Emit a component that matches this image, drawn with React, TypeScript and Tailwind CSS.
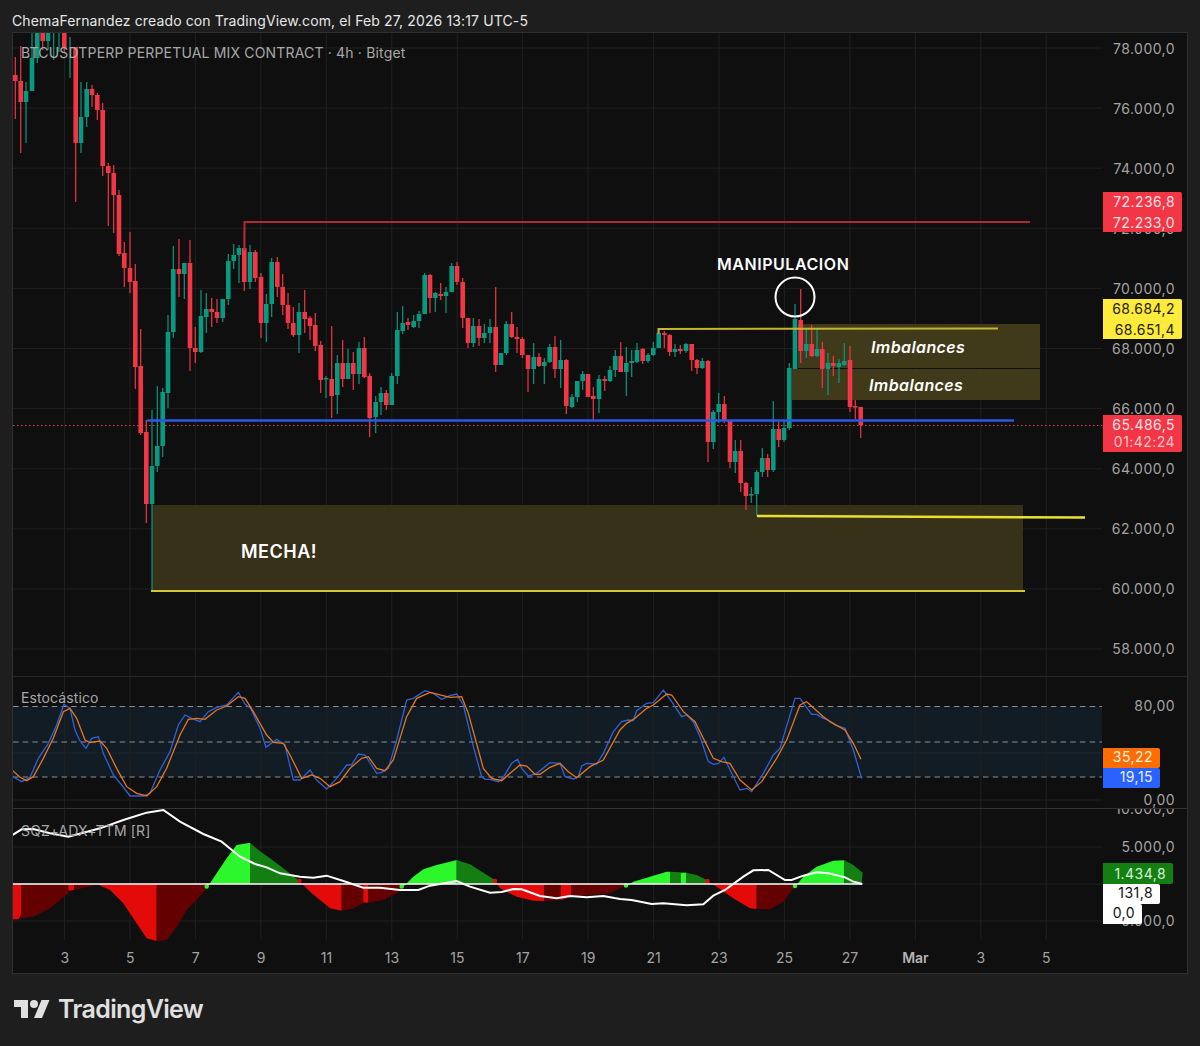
type Candle = [number, "r" | "g", number, number, number, number];

// x, colour, body top, body bottom, wick top, wick bottom (page pixels)
const candles: Candle[] = [
  [15.3, "r", 75, 81, 57, 119], [20.7, "r", 81, 102, 46, 153], [26, "g", 91, 102, 82, 143], [32, "g", 58, 91, 20, 91],
  [37.3, "g", 25, 58, 20, 63], [42.7, "r", 25, 41, 20, 50], [48, "g", 25, 41, 20, 50], [53.7, "g", 20, 22, 20, 60],
  [59, "g", 20, 22, 20, 52], [64.3, "r", 25, 48, 20, 53], [70, "g", 30, 32, 37, 78], [75.7, "r", 47, 143, 47, 202],
  [81, "g", 117, 143, 82, 153], [86.7, "g", 89, 117, 82, 127], [92, "r", 89, 95, 85, 107], [97.3, "r", 95, 110, 93, 120],
  [102.7, "r", 110, 166, 103, 176], [108.3, "r", 166, 173, 163, 226], [113.7, "r", 173, 195, 165, 233], [119, "r", 195, 254, 190, 256],
  [124.3, "r", 253, 268, 242, 287], [130, "r", 268, 282, 232, 293], [135.3, "r", 281, 367, 264, 389], [140.7, "r", 366, 433, 329, 435],
  [146.3, "r", 432, 504, 420, 523], [152, "g", 466, 504, 410, 590], [157.3, "g", 446, 466, 386, 472], [162.7, "g", 392, 446, 388, 457],
  [168, "g", 332, 393, 315, 408], [173.3, "g", 269, 332, 246, 338], [179, "r", 269, 274, 239, 297], [184.3, "g", 263, 274, 263, 299],
  [190, "r", 263, 348, 240, 371], [195.3, "r", 348, 352, 327, 363], [201, "g", 316, 352, 290, 353], [206.3, "g", 309, 317, 293, 333],
  [211.7, "r", 309, 312, 298, 327], [217, "r", 312, 318, 299, 323], [222.7, "g", 299, 318, 299, 322], [228.3, "g", 261, 299, 254, 305],
  [233.7, "g", 255, 261, 244, 269], [239, "g", 248, 255, 245, 283], [244.3, "r", 248, 282, 230, 291], [250, "g", 252, 282, 245, 289],
  [255.3, "r", 252, 278, 250, 282], [261, "r", 277, 323, 273, 338], [266.3, "g", 304, 323, 294, 342], [271.7, "g", 262, 304, 258, 317],
  [277.3, "r", 262, 287, 257, 297], [282.7, "r", 287, 305, 274, 315], [288, "r", 305, 323, 293, 329], [293.3, "r", 323, 335, 307, 337],
  [299, "g", 312, 335, 303, 353], [304.7, "r", 312, 319, 290, 333], [310, "r", 318, 326, 316, 340], [315.3, "r", 325, 346, 313, 351],
  [320.7, "r", 345, 380, 341, 393], [326, "g", 378, 379, 376, 398], [331.7, "r", 379, 396, 326, 418], [337.3, "g", 363, 395, 355, 414],
  [342.7, "r", 363, 379, 340, 387], [348, "g", 363, 379, 349, 379], [353.3, "r", 363, 374, 352, 390], [359, "g", 348, 374, 342, 384],
  [364.3, "r", 348, 377, 337, 378], [369.7, "r", 376, 418, 373, 437], [375.7, "g", 402, 417, 396, 433], [381, "g", 393, 402, 387, 415],
  [386.3, "r", 393, 405, 390, 410], [391.7, "g", 376, 405, 373, 405], [397.3, "g", 330, 376, 312, 384], [402.7, "g", 323, 331, 306, 334],
  [408, "r", 322, 325, 318, 330], [413.7, "g", 321, 327, 315, 328], [419, "g", 314, 321, 311, 328], [424.7, "g", 275, 314, 273, 314],
  [430, "r", 275, 298, 274, 313], [435.3, "g", 293, 298, 292, 312], [440.7, "r", 294, 296, 283, 300], [446, "g", 292, 296, 287, 313],
  [451.7, "g", 266, 292, 263, 292], [457, "r", 266, 282, 262, 285], [462.7, "r", 282, 318, 278, 328], [468, "r", 318, 343, 318, 348],
  [473.3, "g", 326, 343, 318, 347], [479, "r", 326, 338, 319, 346], [484.3, "g", 333, 338, 324, 343], [490, "g", 327, 333, 319, 343],
  [495.7, "r", 327, 365, 287, 372], [501, "g", 353, 365, 353, 365], [506.3, "g", 324, 353, 321, 355], [511.7, "r", 324, 337, 312, 338],
  [517, "r", 337, 339, 327, 353], [522.3, "r", 339, 355, 337, 358], [528, "r", 355, 369, 355, 392], [533.7, "g", 357, 369, 343, 384],
  [539, "r", 357, 366, 353, 367], [544.3, "g", 362, 366, 358, 384], [549.7, "g", 347, 362, 344, 363], [555, "r", 347, 369, 336, 378],
  [560.7, "g", 360, 369, 340, 388], [566.3, "r", 360, 406, 359, 414], [572, "g", 397, 407, 394, 408], [577.3, "g", 381, 397, 381, 402],
  [582.7, "g", 374, 381, 371, 390], [588, "r", 374, 397, 374, 397], [593.3, "r", 396, 399, 387, 421], [599, "g", 379, 399, 375, 413],
  [604.7, "r", 379, 381, 376, 391], [610, "g", 370, 381, 366, 382], [615.3, "g", 356, 370, 350, 377], [620.7, "r", 356, 372, 342, 372],
  [626.3, "g", 363, 372, 347, 396], [631.7, "g", 361, 363, 350, 377], [637, "g", 350, 362, 343, 363], [642.7, "r", 349, 361, 348, 364],
  [648, "g", 355, 361, 353, 363], [653.3, "g", 348, 355, 342, 356], [658.7, "g", 333, 348, 330, 348], [664.3, "r", 333, 335, 331, 348],
  [669.7, "r", 335, 352, 334, 356], [675, "g", 349, 352, 344, 357], [680.3, "r", 349, 351, 345, 354], [686, "g", 344, 351, 343, 353],
  [691.7, "r", 344, 360, 344, 371], [697, "r", 360, 368, 359, 374], [702.3, "g", 361, 368, 358, 369], [708, "r", 361, 442, 360, 462],
  [713.3, "g", 412, 442, 410, 449], [718.7, "g", 404, 412, 393, 423], [724.3, "r", 404, 421, 396, 423], [730, "r", 420, 462, 420, 468],
  [735.3, "g", 451, 462, 440, 473], [740.7, "r", 451, 483, 440, 492], [746, "r", 483, 496, 482, 510], [751.3, "g", 494, 495, 487, 503],
  [756.7, "g", 472, 494, 470, 516], [762.3, "g", 458, 472, 448, 477], [767.7, "r", 458, 470, 454, 477], [773.3, "g", 429, 470, 401, 472],
  [778.7, "r", 429, 440, 422, 447], [784, "g", 428, 440, 420, 442], [789.3, "g", 368, 428, 363, 430], [795, "g", 319, 369, 304, 369],
  [800.7, "r", 320, 351, 289, 363], [806.3, "g", 344, 351, 329, 358], [811.7, "r", 344, 356, 325, 357], [817, "g", 349, 356, 329, 357],
  [822.3, "r", 349, 369, 342, 388], [828, "g", 363, 369, 353, 395], [833.3, "r", 363, 366, 356, 376], [839, "g", 363, 367, 359, 383],
  [844.3, "g", 361, 365, 343, 366], [850, "r", 360, 407, 346, 412], [855.3, "r", 406, 407, 400, 419], [860.7, "r", 407, 425, 407, 438],
];

const dayLines = Array.from({ length: 16 }, (_, i) => 64.5 + i * 65.45);
const priceLines = Array.from({ length: 11 }, (_, i) => 48 + i * 60.1);

const priceTicks = ["78.000,0", "76.000,0", "74.000,0", "72.000,0", "70.000,0", "68.000,0", "66.000,0", "64.000,0", "62.000,0", "60.000,0", "58.000,0"];
const sqzTicks = ["10.000,0", "5.000,0", "", "-5.000,0"];
const days = ["3", "5", "7", "9", "11", "13", "15", "17", "19", "21", "23", "25", "27", "Mar", "3", "5"];

// traced in 3x crop coordinates, x offset per crop, y starts at 680
const toPoints = (pts: number[][], ox: number) => pts.map(([x, y]) => `${ox + x / 3},${680 + y / 3}`).join(" ");

const stochK =
  toPoints([[38,290],[65,305],[90,292],[115,235],[145,190],[170,135],[192,73],[210,85],[225,150],[240,183],[258,205],[275,175],[295,170],[310,220],[340,285],[365,315],[390,348],[430,348],[450,340],[480,270],[510,215],[535,135],[555,105],[575,115],[600,125],[625,95],[650,82],[680,75],[715,37],[735,72],[752,85],[780,145],[798,202],[830,178],[855,195],[880,300],[900,300],[930,270],[950,300],[980,327],[1010,295],[1040,255],[1055,255],[1075,222],[1095,225],[1130,280],[1145,277],[1165,265],[1190,180],[1220,60],[1240,55],[1275,32],[1300,40],[1325,58]], 0) +
  " " +
  toPoints([[0,47],[20,42],[40,75],[70,200],[95,290],[105,298],[120,298],[145,305],[160,292],[185,250],[203,238],[215,265],[235,288],[260,280],[300,248],[330,250],[345,290],[370,297],[385,290],[395,258],[410,250],[440,252],[460,220],[490,155],[515,125],[535,120],[550,122],[560,92],[590,70],[610,68],[640,30],[665,65],[695,110],[710,105],[730,125],[750,170],[775,245],[790,253],[805,250],[822,232],[845,280],[870,330],[890,325],[905,335],[940,280],[970,225],[990,205],[1035,55],[1050,55],[1085,103],[1100,103],[1120,115],[1135,120],[1155,135],[1185,145],[1210,210],[1235,296]], 450);

const stochD =
  toPoints([[38,272],[60,292],[80,302],[100,290],[130,235],[160,175],[190,95],[210,85],[230,115],[255,180],[270,188],[300,183],[320,205],[350,265],[380,320],[410,340],[440,348],[470,320],[500,265],[540,165],[565,118],[590,115],[615,118],[650,90],[680,78],[715,50],[735,55],[760,95],[800,165],[820,187],[850,190],[870,225],[905,295],[935,285],[960,295],[990,320],[1020,305],[1050,265],[1085,235],[1105,230],[1130,265],[1155,272],[1180,240],[1220,110],[1250,55],[1290,37]], 0) +
  " " +
  toPoints([[0,52],[35,50],[55,100],[100,265],[125,295],[155,302],[180,280],[210,255],[230,258],[255,283],[270,283],[300,262],[330,250],[355,275],[380,293],[420,260],[460,240],[510,150],[530,130],[555,115],[590,85],[610,75],[650,42],[665,45],[700,95],[735,125],[790,235],[815,245],[840,250],[870,300],[905,330],[935,305],[980,235],[1010,180],[1050,75],[1070,65],[1120,110],[1140,125],[1185,150],[1210,190],[1233,238]], 450);

const adx =
  toPoints([[38,465],[65,448],[100,447],[150,460],[205,470],[250,458],[300,445],[370,420],[440,398],[490,390],[540,425],[610,462],[665,485],[720,530],[765,552],[800,562],[840,580],[900,590],[940,593],[980,587],[1030,603],[1090,623],[1140,623],[1200,630],[1255,630],[1290,617]], 0) +
  " " +
  toPoints([[0,607],[20,603],[60,620],[120,638],[155,636],[190,627],[215,628],[270,648],[320,655],[360,648],[410,652],[460,648],[510,657],[545,660],[605,672],[640,670],[710,676],[760,673],[790,647],[825,630],[880,590],[910,571],[955,570],[1005,600],[1025,600],[1060,587],[1100,577],[1135,580],[1185,592],[1210,605],[1237,612]], 450);

const RED = "#e30a0a";
const DARK_RED = "#650000";
const GREEN = "#2cf72c";
const DARK_GREEN = "#137f13";

const histogram: [string, number, number[][]][] = [
  [RED, 0, [[38,718],[55,718],[63,705]]],
  [DARK_RED, 0, [[63,715],[100,710],[150,685],[205,640]]],
  [RED, 0, [[205,632],[222,630]]],
  [DARK_RED, 0, [[222,630],[290,615]]],
  [RED, 0, [[290,612],[330,630],[370,670],[410,730],[440,775],[470,783]]],
  [DARK_RED, 0, [[470,783],[500,780],[530,740],[560,690],[590,660],[620,625]]],
  [GREEN, 0, [[620,625],[650,580],[680,535],[710,495],[750,488]]],
  [DARK_GREEN, 0, [[750,488],[775,510],[810,535],[850,565],[895,600]]],
  [RED, 0, [[895,600],[930,635],[960,660],[990,685],[1025,692]]],
  [DARK_RED, 0, [[1025,692],[1060,685],[1090,670]]],
  [RED, 0, [[1090,668],[1105,668]]],
  [DARK_RED, 0, [[1105,668],[1150,660],[1190,640],[1205,625]]],
  [GREEN, 0, [[1205,625],[1240,590],[1270,568],[1310,555],[1350,545],[1370,540]]],
  [DARK_GREEN, 450, [[20,540],[60,553],[100,578],[135,600]]],
  [RED, 450, [[135,600],[150,625],[200,650],[250,662],[283,663]]],
  [DARK_RED, 450, [[283,663],[332,660]]],
  [RED, 450, [[332,660],[363,650]]],
  [DARK_RED, 450, [[363,650],[420,645],[480,640],[525,618]]],
  [GREEN, 450, [[525,620],[550,605],[600,590],[650,575],[660,575]]],
  [DARK_GREEN, 450, [[660,575],[692,577]]],
  [GREEN, 450, [[692,578],[708,578]]],
  [DARK_GREEN, 450, [[708,578],[740,585],[770,600]]],
  [RED, 450, [[770,602],[800,620],[850,655],[900,685],[920,687]]],
  [DARK_RED, 450, [[920,687],[960,688],[1000,665],[1035,618]]],
  [GREEN, 450, [[1035,620],[1060,590],[1100,560],[1150,542],[1183,541]]],
  [DARK_GREEN, 450, [[1183,541],[1210,555],[1238,578],[1235,612]]],
];

// rounded feet where the histogram changes sign
const feet: [number, number, string][] = [
  [206.7, 886.5, GREEN], [401.7, 886.5, GREEN], [626, 885.5, GREEN], [795, 886, GREEN],
  [299.5, 881, RED], [495, 881, RED], [707.5, 881, RED],
];

function Candles() {
  return (
    <>
      {candles.map(([x, c, top, bottom, hi, lo]) => {
        const fill = c === "r" ? "#f23645" : "#089981";
        return (
          <g key={x} fill={fill}>
            <rect x={x - 0.6} y={hi} width={1.2} height={lo - hi} />
            <rect x={x - 2.3} y={top} width={4.6} height={Math.max(bottom - top, 1.5)} />
          </g>
        );
      })}
    </>
  );
}

function VerticalGrid({ y1, y2 }: { y1: number; y2: number }) {
  return (
    <>
      {dayLines.map((x) => (
        <line key={x} x1={x} x2={x} y1={y1} y2={y2} stroke="#202020" />
      ))}
    </>
  );
}

function Badge({ className, children }: { className: string; children: React.ReactNode }) {
  return <div className={`absolute left-[1px] flex flex-col items-end justify-center rounded-r-[2px] pr-[7px] ${className}`}>{children}</div>;
}

function PricePane() {
  return (
    <div className="flex h-[644px] border-b border-[#262626]">
      <div className="relative w-[1089px] shrink-0 overflow-hidden">
        <svg viewBox="13 33 1089 643" width={1089} height={643}>
          {priceLines.map((y) => (
            <line key={y} x1={13} x2={1102} y1={y} y2={y} stroke="#202020" />
          ))}
          <VerticalGrid y1={33} y2={676} />
          <rect x={152} y={505} width={871} height={86} fill="#37311a" />
          <rect x={798} y={324} width={242} height={44} fill="#403a1b" />
          <rect x={792} y={369} width={248} height={31} fill="#403a1b" />
          <line x1={13} x2={1102} y1={425.5} y2={425.5} stroke="#f23645" strokeDasharray="1.5 2.5" />
          <Candles />
          <polyline points="244.5,250 244.5,222 1030,222" fill="none" stroke="#b02a35" strokeWidth={2} />
          <polyline points="658.5,334 658.5,329 998,328.5" fill="none" stroke="#c4b52e" strokeWidth={2} />
          <line x1={147} x2={1014} y1={420.5} y2={420.5} stroke="#2b58e8" strokeWidth={2.4} />
          <line x1={151} x2={1025} y1={591} y2={591} stroke="#d4c535" strokeWidth={2} />
          <line x1={757} x2={1085} y1={516} y2={517.5} stroke="#ece02f" strokeWidth={2.4} />
          <circle cx={795} cy={297} r={19.5} fill="none" stroke="#ffffff" strokeWidth={2} />
        </svg>
        <span className="absolute left-[8px] top-[9px] text-[14px] tracking-[0.17px] text-[#a8a8a8]">BTCUSDTPERP PERPETUAL MIX CONTRACT · 4h · Bitget</span>
        <span className="absolute left-[704px] top-[219px] text-[16px] font-semibold tracking-[0.55px] text-white">MANIPULACION</span>
        <span className="absolute left-[858px] top-[302px] text-[16px] font-semibold italic tracking-[0.4px] text-white">Imbalances</span>
        <span className="absolute left-[856px] top-[340px] text-[16px] font-semibold italic tracking-[0.4px] text-white">Imbalances</span>
        <span className="absolute left-[228px] top-[505px] text-[18px] font-semibold tracking-[0.5px] text-white">MECHA!</span>
      </div>
      <div className="relative flex-1 overflow-hidden tracking-[0.45px]">
        <div className="-mt-[15px] flex flex-col items-end pr-[12px] text-[#a3a3a3]">
          {priceTicks.map((t) => (
            <span key={t} className="flex h-[60.1px] shrink-0 items-center">
              {t}
            </span>
          ))}
        </div>
        <Badge className="top-[159px] h-[40px] w-[79px] bg-[#f23645] text-[#fbe3e5]">
          <span>72.236,8</span>
          <span>72.233,0</span>
        </Badge>
        <Badge className="top-[266px] h-[40px] w-[79px] bg-[#ffeb3b] text-[#1c1c0a]">
          <span>68.684,2</span>
          <span>68.651,4</span>
        </Badge>
        <Badge className="top-[382px] h-[37px] w-[79px] bg-[#f23645] pb-[2px] leading-[17px] text-[#fbe3e5]">
          <span>65.486,5</span>
          <span className="text-[#fcc4c9]">01:42:24</span>
        </Badge>
      </div>
    </div>
  );
}

function StochPane() {
  return (
    <div className="flex h-[132px] border-b border-[#333333]">
      <div className="relative w-[1089px] shrink-0 overflow-hidden">
        <svg viewBox="13 677 1089 131" width={1089} height={131}>
          <rect x={13} y={706.5} width={1089} height={70.5} fill="#121c25" />
          <line x1={13} x2={1102} y1={753} y2={753} stroke="#1d2730" />
          <line x1={13} x2={1102} y1={800} y2={800} stroke="#202020" />
          <VerticalGrid y1={677} y2={808} />
          {[706.5, 742, 777].map((y) => (
            <line key={y} x1={13} x2={1102} y1={y} y2={y} stroke="#8a8f94" strokeDasharray="5.5 4.2" />
          ))}
          <polyline points={stochK} fill="none" stroke="#2e62d8" strokeWidth={1.3} />
          <polyline points={stochD} fill="none" stroke="#e8761a" strokeWidth={1.3} />
        </svg>
        <span className="absolute left-[8px] top-[10px] text-[14px] tracking-[0.1px] text-[#a8a8a8]">Estocástico</span>
      </div>
      <div className="relative flex-1 tracking-[0.45px]">
        <div className="flex flex-col gap-[74px] pr-[12px] pt-[19px] text-right text-[#a3a3a3]">
          <span className="h-[20px] leading-[20px]">80,00</span>
          <span className="h-[20px] leading-[20px]">0,00</span>
        </div>
        <Badge className="top-[71px] h-[20px] w-[57px] bg-[#ff6d00] pb-[3px] text-[#fff0e0]">35,22</Badge>
        <Badge className="top-[91px] h-[20px] w-[57px] bg-[#2962ff] pb-[3px] text-[#e8eeff]">19,15</Badge>
      </div>
    </div>
  );
}

function SqzPane() {
  return (
    <div className="flex h-[133px]">
      <div className="relative w-[1089px] shrink-0 overflow-hidden">
        <svg viewBox="13 809 1089 133" width={1089} height={133}>
          {[847, 884, 921].map((y) => (
            <line key={y} x1={13} x2={1102} y1={y} y2={y} stroke="#202020" />
          ))}
          <VerticalGrid y1={809} y2={940} />
          {histogram.map(([fill, ox, pts], i) => (
            <polygon
              key={i}
              fill={fill}
              points={toPoints([[pts[0][0], 612], ...pts, [pts[pts.length - 1][0], 612]], ox)}
            />
          ))}
          {feet.map(([cx, cy, fill]) => (
            <circle key={cx} cx={cx} cy={cy} r={2.2} fill={fill} />
          ))}
          <line x1={13} x2={862} y1={884} y2={884} stroke="#ffffff" strokeWidth={1.6} />
          <polyline points={adx} fill="none" stroke="#ffffff" strokeWidth={2} />
        </svg>
        <span className="absolute left-[8px] top-[11px] text-[14px] tracking-[0.15px] text-[#a8a8a8]">SQZ+ADX+TTM [R]</span>
      </div>
      <div className="relative flex-1 overflow-hidden tracking-[0.45px]">
        <div className="-mt-[19px] flex flex-col items-end pr-[12px] text-[#a3a3a3]">
          {sqzTicks.map((t) => (
            <span key={t} className="flex h-[37.4px] shrink-0 items-center">
              {t}
            </span>
          ))}
        </div>
        <Badge className="top-[54px] h-[21px] w-[70px] bg-[#137f13] text-[#d8f0d8]">1.434,8</Badge>
        <Badge className="top-[75px] h-[20px] w-[57px] bg-white pb-[3px] text-[#111111]">131,8</Badge>
        <Badge className="top-[95px] h-[20px] w-[39px] bg-white pb-[3px] pr-[6px] text-[#111111]">0,0</Badge>
      </div>
    </div>
  );
}

function TimeAxis() {
  return (
    <div className="flex h-[32px] items-center pl-[19px]">
      {days.map((d, i) => (
        <span
          key={i}
          className={`w-[65.45px] shrink-0 text-center ${d === "Mar" ? "font-semibold text-[#b5b5b5]" : "text-[#a3a3a3]"}`}
        >
          {d}
        </span>
      ))}
    </div>
  );
}

export default function App() {
  return (
    <div className="flex h-[1046px] w-[1200px] flex-col overflow-hidden bg-[#1e1e1e] font-['Inter',sans-serif] text-[14px]">
      <header className="flex h-[32px] items-center px-3 pt-[9px] text-[14px] tracking-[0.13px] text-[#e6e6e6]">
        ChemaFernandez creado con TradingView.com, el Feb 27, 2026 13:17 UTC-5
      </header>
      <div className="mx-3 flex h-[942px] flex-col border border-[#303030] bg-[#0f0f0f]">
        <PricePane />
        <StochPane />
        <SqzPane />
        <TimeAxis />
      </div>
      <footer className="flex flex-1 items-center gap-[8px] pl-[14px] text-[#e0e0e0]">
        <svg viewBox="0 0 36 28" width={36} height={28} fill="currentColor">
          <path d="M14 22H7V11H0V4h14v18zM28 22h-8l7.5-18h8L28 22z" />
          <circle cx={20} cy={8} r={4} />
        </svg>
        <span className="text-[25px] font-semibold tracking-[-0.65px]">TradingView</span>
      </footer>
    </div>
  );
}
